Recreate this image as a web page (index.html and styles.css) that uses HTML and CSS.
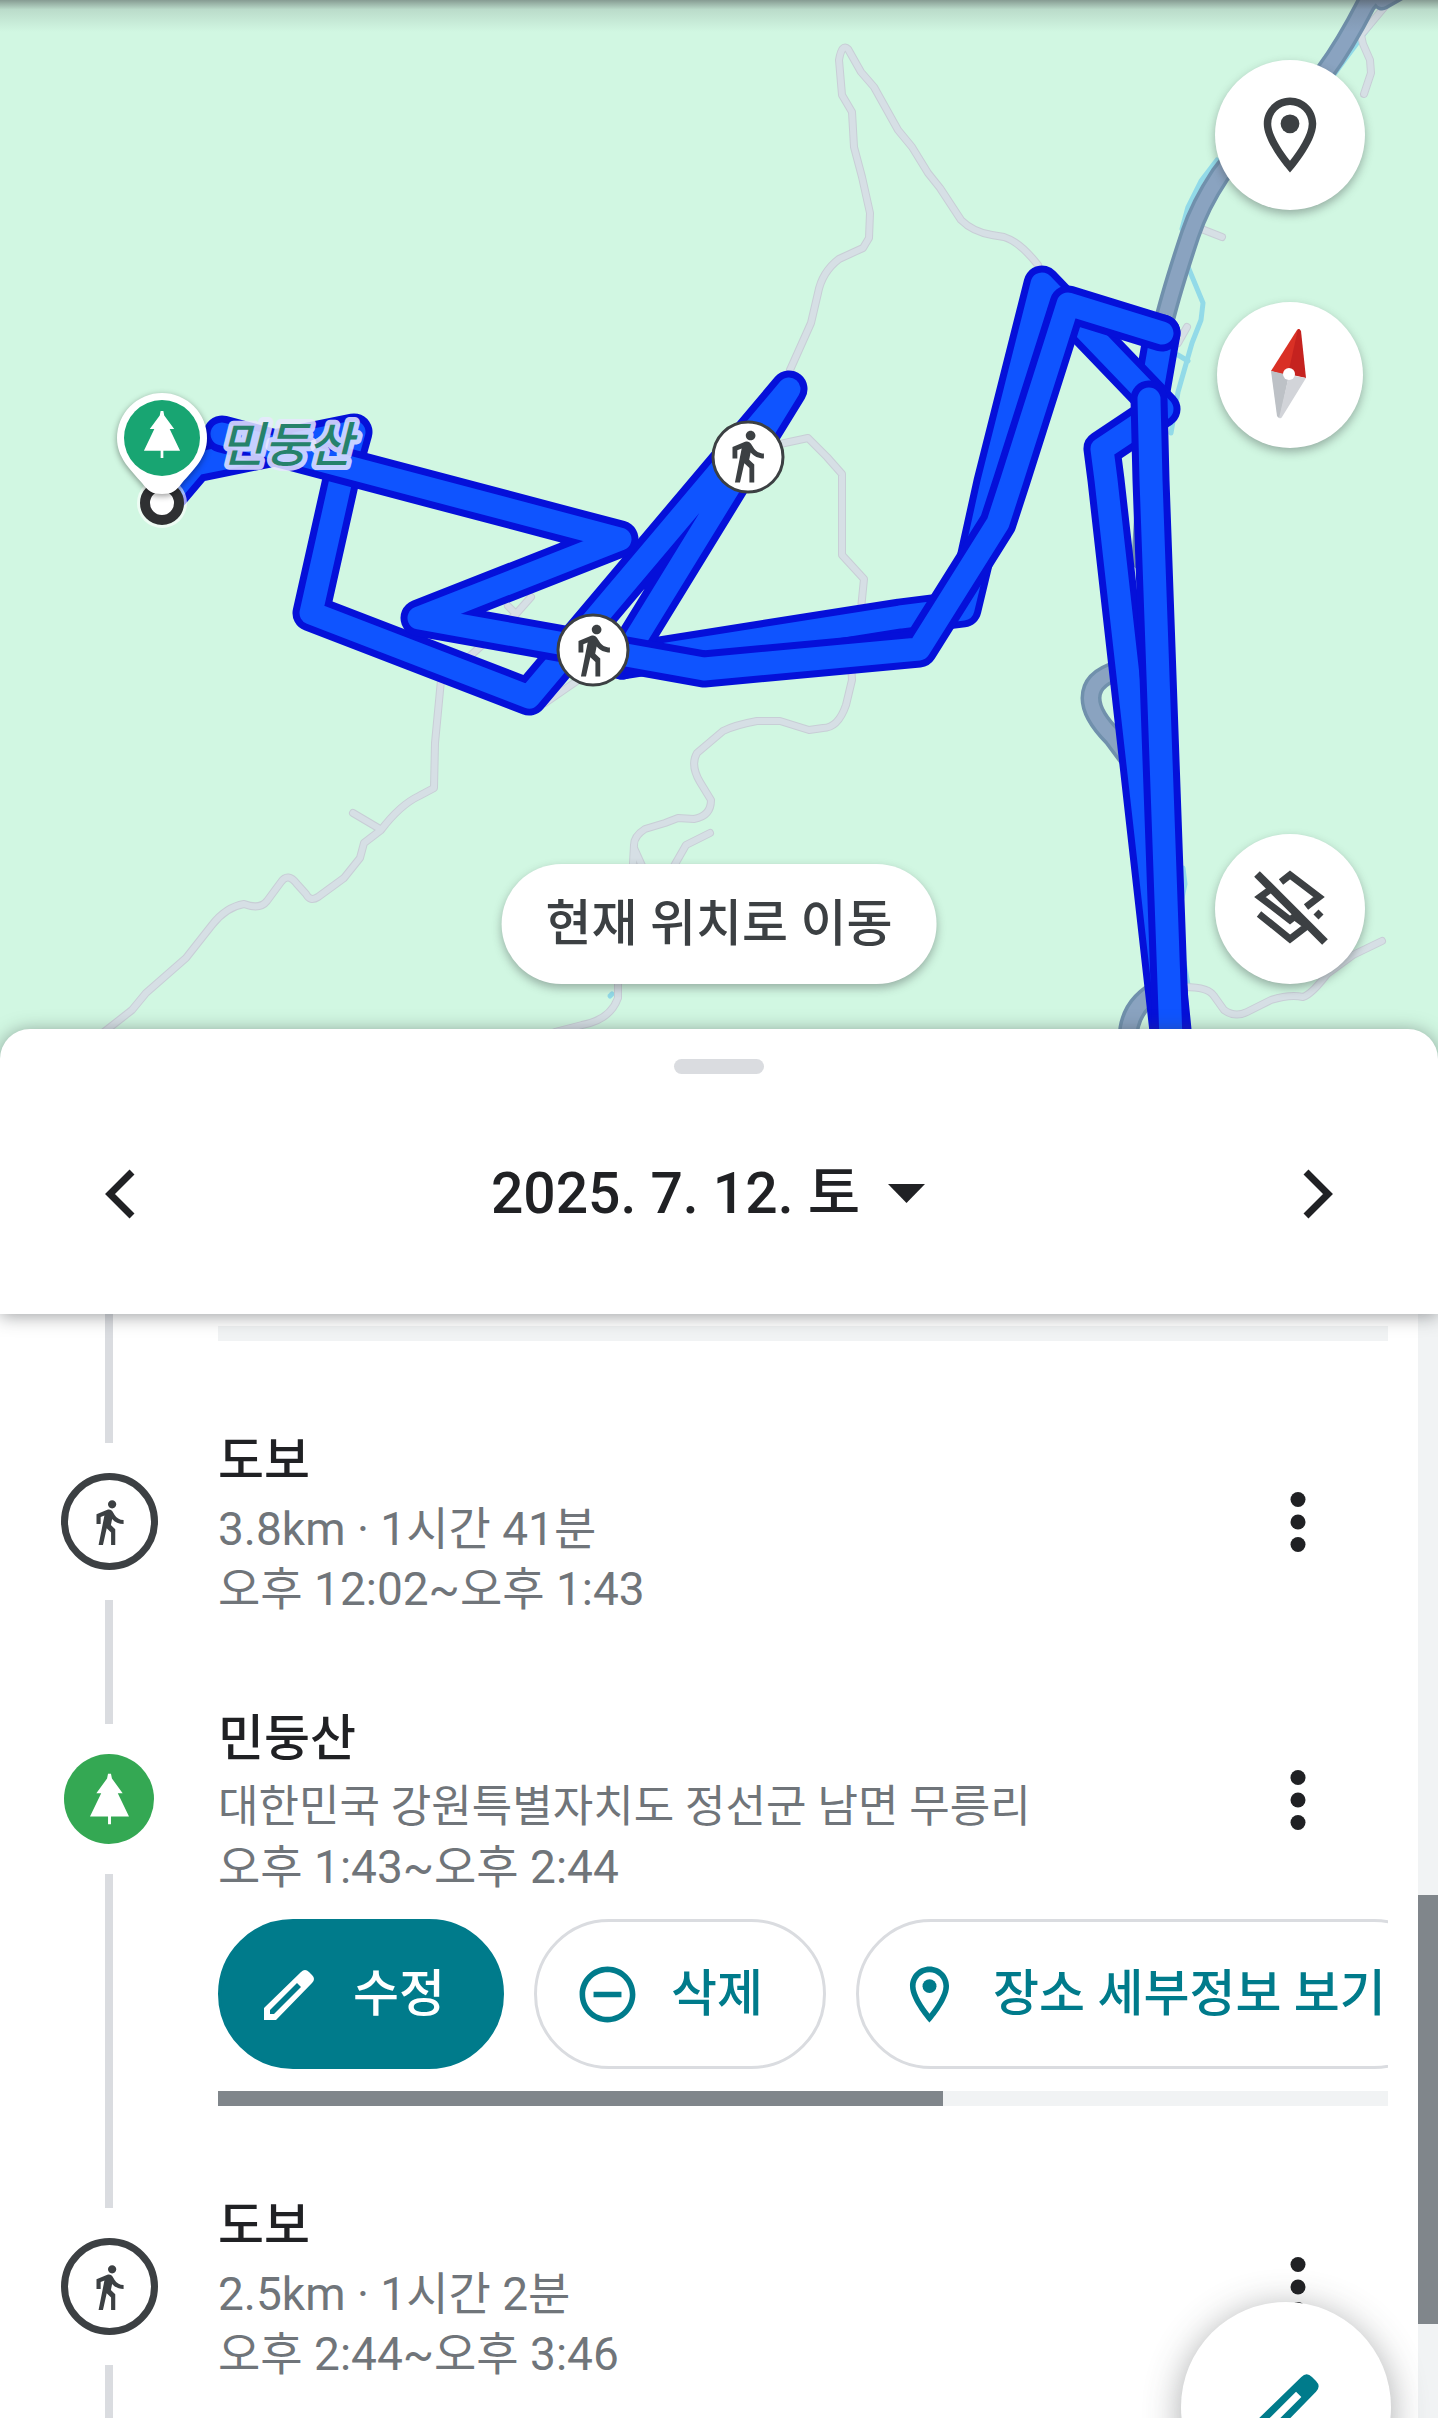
FILE: index.html
```html
<!DOCTYPE html>
<html lang="ko">
<head>
<meta charset="utf-8">
<meta name="viewport" content="width=device-width, initial-scale=1">
<title>타임라인</title>
<link rel="stylesheet" href="styles.css">
</head>
<body>
<svg class="sprite" aria-hidden="true">
  <symbol id="walk" viewBox="0 0 24 24"><path d="M13.5 5.5c1.1 0 2-.9 2-2s-.9-2-2-2-2 .9-2 2 .9 2 2 2zM9.8 8.9L7 23h2.1l1.8-8 2.1 2v6h2v-7.5l-2.1-2 .6-3C14.8 12 16.8 13 19 13v-2c-1.9 0-3.5-1-4.3-2.4l-1-1.6c-.4-.6-1-1-1.7-1-.3 0-.5.1-.8.1L6 8.3V13h2V9.6l1.8-.7"/></symbol>
  <symbol id="place" viewBox="0 0 24 24"><path d="M12 2C8.130 2 5 5.130 5 9c0 5.250 7 13 7 13s7-7.750 7-13c0-3.870-3.130-7-7-7zM7 9c0-2.760 2.240-5 5-5s5 2.240 5 5c0 2.880-2.880 7.190-5 9.880C9.920 16.210 7 11.850 7 9z"/><circle cx="12" cy="9" r="2.5"/></symbol>
  <symbol id="tree" viewBox="0 0 40 52"><path d="M18.500 0h3l1 5 11 15h-5l11.500 24H21.500v8h-3v-8H0l11.500-24h-5l11-15z"/></symbol>
  <symbol id="more" viewBox="0 0 60 60"><circle cx="30" cy="7.500" r="7.500"/><circle cx="30" cy="30" r="7.500"/><circle cx="30" cy="52.500" r="7.500"/></symbol>
  <symbol id="pencil" viewBox="0 0 51 51"><path fill-rule="evenodd" d="M0 51V39L37 3q4-4 8 0l3 3q4 4 0 8L12 51zM6 45h4l27-27-4-4L6 41z"/></symbol>
</svg>

<section class="map" aria-label="지도">
  <svg class="map-canvas" viewBox="0 0 1438 1059">
    <g class="river">
      <path d="M1390 2C1365 30 1345 60 1330 80M1217 160L1201 181 1188 207 1182 229"/>
      <path d="M1186 262L1203 303 1201 320 1192 343 1178 392 1171 433M1178 355L1188 361M1183 868L1185 884 1182 898M1184 962L1188 985"/>
      <path d="M610 996L612 994"/>
    </g>
    <g class="road-edge">
      <path d="M790 370L811 323 818 293Q822 272 839 259L863 248 869 238 870 213 862 177 854 147 852 112 842 95 839 60Q842 43 848 49L861 72 874 87 898 130 912 147 928 173 940 188 961 220Q973 232 992 235L1004 237Q1020 242 1038 265"/>
      <path d="M1387 4L1361 35 1363 44 1370 60 1371 73 1364 94M1199 228L1222 237M1187 327L1178 343"/>
      <path d="M780 444L808 438 827 457 842 474 842 555 864 579 861 609 849 630 852 680 846 705Q838 728 823 728L809 730 780 721 757 721Q735 725 723 731L697 753Q690 765 700 782L711 800Q711 816 694 819L678 818 665 823 645 829Q634 836 634 845L633 863M634 848L643 868M710 833L686 845 674 866"/>
      <path d="M618 984L618 998Q610 1020 582 1025L555 1032"/>
      <path d="M441 680L435 743 434 788 419 796Q400 805 381 830L364 843 360 858 344 878 318 897Q310 902 306 894L297 884Q288 872 281 882L267 901Q260 910 244 904 226 907 212 925L186 958 146 993 132 1010 104 1032M353 813L380 829M457 668L516 614 531 597M508 606L516 614M545 703L600 665"/>
      <path d="M1180 987Q1208 986 1214 996L1224 1010Q1235 1018 1247 1012L1271 1000Q1290 994 1303 997 1312 994 1327 974L1353 955 1382 941"/>
    </g>
    <g class="road">
      <path d="M790 370L811 323 818 293Q822 272 839 259L863 248 869 238 870 213 862 177 854 147 852 112 842 95 839 60Q842 43 848 49L861 72 874 87 898 130 912 147 928 173 940 188 961 220Q973 232 992 235L1004 237Q1020 242 1038 265"/>
      <path d="M1387 4L1361 35 1363 44 1370 60 1371 73 1364 94M1199 228L1222 237M1187 327L1178 343"/>
      <path d="M780 444L808 438 827 457 842 474 842 555 864 579 861 609 849 630 852 680 846 705Q838 728 823 728L809 730 780 721 757 721Q735 725 723 731L697 753Q690 765 700 782L711 800Q711 816 694 819L678 818 665 823 645 829Q634 836 634 845L633 863M634 848L643 868M710 833L686 845 674 866"/>
      <path d="M618 984L618 998Q610 1020 582 1025L555 1032"/>
      <path d="M441 680L435 743 434 788 419 796Q400 805 381 830L364 843 360 858 344 878 318 897Q310 902 306 894L297 884Q288 872 281 882L267 901Q260 910 244 904 226 907 212 925L186 958 146 993 132 1010 104 1032M353 813L380 829M457 668L516 614 531 597M508 606L516 614M545 703L600 665"/>
      <path d="M1180 987Q1208 986 1214 996L1224 1010Q1235 1018 1247 1012L1271 1000Q1290 994 1303 997 1312 994 1327 974L1353 955 1382 941"/>
    </g>
    <g class="highway-edge">
      <path d="M1396 -8L1382 0M1376 -8L1366 4Q1345 45 1325 72 1250 135 1220 175 1200 205 1190 235 1170 295 1162 330L1148 460 1142 560"/>
      <path d="M1120 670Q1091 678 1091 698 1091 715 1113 737L1136 768M1162 988Q1128 1004 1128 1040"/>
    </g>
    <g class="highway">
      <path d="M1396 -8L1382 0M1376 -8L1366 4Q1345 45 1325 72 1250 135 1220 175 1200 205 1190 235 1170 295 1162 330L1148 460 1142 560"/>
      <path d="M1120 670Q1091 678 1091 698 1091 715 1113 737L1136 768M1162 988Q1128 1004 1128 1040"/>
    </g>

    <g class="route">
      <path class="case" d="M1166 960L1174 1040M1162 333L1150 402"/>
      <path class="line" d="M1166 960L1174 1040M1162 333L1150 402"/>
      <path class="case" d="M622 661L900 617 963 609 975 559 992 482 1042 284 1162 409 1102 449 1106 480 1169 1040"/>
      <path class="line" d="M622 661L900 617 963 609 975 559 992 482 1042 284 1162 409 1102 449 1106 480 1169 1040"/>
      <path class="case" d="M162 503L195 464 354 432 342 475 311 613 529 697 789 389 622 661"/>
      <path class="line" d="M162 503L195 464 354 432 342 475 311 613 529 697 789 389 622 661"/>
      <path class="case" d="M222 434L620 539 419 618 704 669 919 649 998 523 1012 480 1068 304 1162 333"/>
      <path class="line" d="M222 434L620 539 419 618 704 669 919 649 998 523 1012 480 1068 304 1162 333"/>
      <path class="case" d="M1149 399L1151 480 1171 1040"/>
      <path class="line" d="M1149 399L1151 480 1171 1040"/>
    </g>

    <text class="map-label" x="220" y="462">민둥산</text>

    <circle class="stop-halo" cx="162" cy="503" r="25"/>
    <circle class="stop-ring" cx="162" cy="503" r="17"/>
    <g class="pin">
      <path class="pin-body" d="M162 393a45 45 0 0 1 45 45c0 20-14 32-25 45-6 8-10 11-20 11s-14-3-20-11c-11-13-25-25-25-45a45 45 0 0 1 45-45z"/>
      <circle class="pin-face" cx="162" cy="438" r="38"/>
      <use href="#tree" x="143" y="411" width="38" height="47"/>
    </g>
    <g class="walk-marker">
      <circle cx="748" cy="457" r="35"/>
      <use href="#walk" x="718" y="427" width="58" height="58"/>
      <circle cx="593" cy="650" r="35"/>
      <use href="#walk" x="564" y="621" width="58" height="58"/>
    </g>
  </svg>

  <button class="round place-btn" type="button" aria-label="장소">
    <svg class="icon-90"><use href="#place"/></svg>
  </button>
  <button class="round compass-btn" type="button" aria-label="나침반">
    <svg class="icon-90" viewBox="0 0 90 90">
      <path fill="#d93025" d="M52 0Q54 -2 55 0L43 46 26 41z"/><path fill="#c5221f" d="M53 -1Q55 -1 56 1L61 48 43 44z"/>
      <path fill="#bdc1c6" d="M26 41L44 45 35 88Q33 88 32 86z"/><path fill="#d2d4d9" d="M44 45L61 48 37 87Q36 89 34 88z"/>
      <circle cx="44" cy="44" r="6" fill="#fff"/>
    </svg>
  </button>
  <button class="round layers-btn" type="button" aria-label="레이어 숨기기">
    <svg class="icon-90" viewBox="0 0 90 90">
      <g fill="none" stroke="#3c4043" stroke-width="7">
        <path d="M36 18L45 11 74 33 61 43"/>
        <path d="M26 25L15 33 45 56 54 49"/>
        <path d="M14 50L45 75 62 62 50 53"/>
        <path stroke-width="8" d="M12 10L80 78"/>
        <path d="M71 48L76 53"/>
      </g>
    </svg>
  </button>
  <button class="pill" type="button">현재 위치로 이동</button>
</section>

<header class="sheet-head">
  <div class="handle"></div>
  <nav class="day-nav">
    <button class="nav-btn" type="button" aria-label="이전 날짜"><svg width="30" height="50" viewBox="0 0 30 50"><path d="M27 3L5 25 27 47"/></svg></button>
    <button class="date-btn" type="button">2025. 7. 12. 토 <svg width="37" height="19" viewBox="0 0 37 19"><path d="M0 0h37L18.500 19z"/></svg></button>
    <button class="nav-btn" type="button" aria-label="다음 날짜"><svg width="30" height="50" viewBox="0 0 30 50"><path d="M3 3L25 25 3 47"/></svg></button>
  </nav>
</header>

<main class="panel">
  <ol class="timeline">
    <li class="item item-prev">
      <div class="rail"><span class="rail-line"></span></div>
      <div class="body"><div class="h-scroll"></div></div>
    </li>
    <li class="item">
      <div class="rail"><span class="rail-lead"></span><span class="badge badge-walk"><svg><use href="#walk"/></svg></span><span class="rail-line"></span></div>
      <div class="body">
        <div class="entry">
          <div class="entry-text"><h2>도보</h2><p>3.8km · 1시간 41분</p><p>오후 12:02~오후 1:43</p></div>
          <button class="more" type="button" aria-label="더보기"><svg><use href="#more"/></svg></button>
        </div>
      </div>
    </li>
    <li class="item item-place">
      <div class="rail"><span class="rail-lead"></span><span class="badge badge-tree"><svg><use href="#tree"/></svg></span><span class="rail-line"></span></div>
      <div class="body">
        <div class="entry">
          <div class="entry-text"><h2>민둥산</h2><p class="address">대한민국 강원특별자치도 정선군 남면 무릉리</p><p>오후 1:43~오후 2:44</p></div>
          <button class="more" type="button" aria-label="더보기"><svg><use href="#more"/></svg></button>
        </div>
        <div class="actions">
          <button class="chip chip-filled" type="button"><svg class="chip-pencil"><use href="#pencil"/></svg>수정</button>
          <button class="chip" type="button"><svg viewBox="0 0 24 24"><path d="M7 11v2h10v-2H7zm5-9C6.480 2 2 6.480 2 12s4.480 10 10 10 10-4.480 10-10S17.520 2 12 2zm0 18c-4.410 0-8-3.590-8-8s3.590-8 8-8 8 3.590 8 8-3.590 8-8 8z"/></svg>삭제</button>
          <button class="chip" type="button"><svg><use href="#place"/></svg>장소 세부정보 보기</button>
        </div>
        <div class="h-scroll"><div class="h-thumb"></div></div>
      </div>
    </li>
    <li class="item">
      <div class="rail"><span class="rail-lead"></span><span class="badge badge-walk"><svg><use href="#walk"/></svg></span><span class="rail-line"></span></div>
      <div class="body">
        <div class="entry">
          <div class="entry-text"><h2>도보</h2><p>2.5km · 1시간 2분</p><p>오후 2:44~오후 3:46</p></div>
          <button class="more" type="button" aria-label="더보기"><svg><use href="#more"/></svg></button>
        </div>
      </div>
    </li>
  </ol>
  <div class="v-scroll"><div class="v-thumb"></div></div>
  <button class="fab" type="button" aria-label="수정"><svg><use href="#pencil"/></svg></button>
</main>
</body>
</html>
```

FILE: styles.css
```css
* { box-sizing: border-box; }
body {
  margin: 0;
  height: 100vh;
  display: flex;
  flex-direction: column;
  overflow: hidden;
  background: #fff;
  color: #202124;
  font-family: Roboto, "Noto Sans CJK KR", sans-serif;
}
button {
  border: 0;
  padding: 0;
  background: none;
  color: inherit;
  font: inherit;
  cursor: pointer;
}
svg { display: block; fill: currentColor; }
.sprite { position: absolute; width: 0; height: 0; }

/* Map: runs on under the rounded corners of the sheet */
.map { position: relative; flex: none; margin-bottom: -30px; background: #d1f7e2; }
.map::before {
  content: "";
  position: absolute;
  inset: 0 0 auto;
  height: 32px;
  background: linear-gradient(rgba(60, 64, 67, .5), rgba(60, 64, 67, .15) 30%, rgba(60, 64, 67, 0));
}
.map-canvas { width: 100%; height: auto; }
.map-canvas path { stroke-linecap: round; stroke-linejoin: round; }
.river, .road, .road-edge, .highway, .highway-edge, .route { fill: none; }
.river { stroke: #92dae8; stroke-width: 5; }
.road-edge { stroke: #c8ced6; stroke-width: 8; }
.road { stroke: #d6dfe5; stroke-width: 6; }
.highway-edge { stroke: #7090ac; stroke-width: 21; }
.highway { stroke: #8aa3c0; stroke-width: 14; }
.case { stroke: #0510d9; stroke-width: 37; }
.line { stroke: #0f54ff; stroke-width: 23; }
.map-label {
  font: italic 500 48px "Noto Sans CJK KR", sans-serif;
  fill: #26826b;
  stroke: rgba(232, 232, 255, .86);
  stroke-width: 10;
  stroke-linejoin: round;
  paint-order: stroke;
}
.stop-halo { fill: rgba(255, 255, 255, .6); }
.stop-ring { fill: #fff; stroke: #2f3032; stroke-width: 10; }
.pin { fill: #fff; filter: drop-shadow(0 2px 3px rgba(0, 0, 0, .4)); }
.pin-face { fill: #18a572; }
.walk-marker { fill: #3c4043; }
.walk-marker circle { fill: #fff; stroke: #3c4043; stroke-width: 3; }

.round, .pill {
  position: absolute;
  background: #fff;
  color: #3c4043;
  box-shadow: 0 4px 10px rgba(60, 64, 67, .4);
}
.round {
  right: 73px;
  width: 150px;
  height: 150px;
  border-radius: 50%;
  display: grid;
  place-items: center;
}
.icon-90 { width: 90px; height: 90px; overflow: visible; }
.place-btn { top: 60px; }
.compass-btn { top: 302px; right: 75px; width: 146px; height: 146px; }
.layers-btn { bottom: 75px; }
.pill {
  left: 50%;
  bottom: 75px;
  transform: translateX(-50%);
  height: 120px;
  padding: 0 44px;
  border-radius: 60px;
  font-size: 50px;
  line-height: 72px;
  font-weight: 500;
  white-space: nowrap;
}

/* Sheet header */
.sheet-head {
  position: relative;
  z-index: 2;
  flex: none;
  padding: 30px 60px 61px;
  background: #fff;
  border-radius: 30px 30px 0 0;
  box-shadow: 0 2px 18px rgba(60, 64, 67, .5);
}
.handle { width: 90px; height: 15px; margin: 0 auto 60px; border-radius: 8px; background: #dadce0; }
.day-nav { display: flex; align-items: center; justify-content: space-between; }
.nav-btn { width: 119px; height: 119px; display: grid; place-items: center; }
.nav-btn path { fill: none; stroke: #202124; stroke-width: 7; }
.date-btn { display: flex; align-items: center; gap: 28px; padding-right: 22px; font-size: 57px; line-height: 72px; font-weight: 500; }

/* Timeline */
.panel { position: relative; flex: 1; min-height: 0; display: flex; overflow: hidden; }
.timeline { flex: 1; min-width: 0; margin: 0; padding: 0 30px 0 0; list-style: none; }
.item { display: grid; grid-template-columns: 218px minmax(0, 1fr); }
.rail { display: flex; flex-direction: column; align-items: center; }
.rail-lead, .rail-line { width: 8px; background: #dadce0; }
.rail-lead { height: 62px; }
.rail-line { flex: 1; }
.item-place .rail-lead { height: 65px; }
.badge { display: grid; place-items: center; margin: 30px 0; border-radius: 50%; }
.badge-walk { width: 97px; height: 97px; border: 7px solid #3c4043; color: #3c4043; }
.badge-walk svg { width: 50px; height: 50px; }
.badge-tree { width: 90px; height: 90px; background: #34a853; color: #fff; }
.badge-tree svg { width: 39px; height: 52px; }
.body { padding: 44px 0 40px; }
.item-prev .body { padding-top: 12px; }
.entry { display: flex; align-items: center; justify-content: space-between; }
h2, p { margin: 0; }
h2 { padding-bottom: 2px; font-size: 50px; line-height: 72px; font-weight: 500; }
p { font-size: 46px; line-height: 60px; color: #70757a; }
.address { font-size: 44px; }
.more { padding: 30px 60px; }
.more svg { width: 60px; height: 60px; }
.actions { display: flex; gap: 30px; margin: 22px 0; overflow: hidden; }
.chip {
  flex: none;
  display: flex;
  align-items: center;
  gap: 30px;
  height: 150px;
  padding: 0 60px 0 37px;
  border: 3px solid #dadce0;
  border-radius: 75px;
  color: #007b8b;
  font-size: 50px;
  line-height: 72px;
  font-weight: 500;
  white-space: nowrap;
}
.chip svg { width: 67px; height: 67px; }
.chip-filled { padding: 0 56px 0 43px; gap: 38px; border-color: #007b8b; background: #007b8b; color: #fff; }
.chip .chip-pencil { width: 51px; height: 51px; }
.h-scroll { height: 15px; background: #f1f3f4; }
.h-thumb { width: 62%; height: 100%; background: #80868b; }
.v-scroll { width: 20px; background: #f1f3f4; padding-top: 581px; }
.v-thumb { height: 429px; background: #80868b; }
.fab {
  position: absolute;
  right: 47px;
  bottom: -94px;
  width: 210px;
  height: 210px;
  border-radius: 50%;
  display: grid;
  place-items: center;
  background: #fff;
  color: #007b8b;
  box-shadow: 0 6px 36px rgba(60, 64, 67, .45);
}
.fab svg { width: 68px; height: 68px; }
```
